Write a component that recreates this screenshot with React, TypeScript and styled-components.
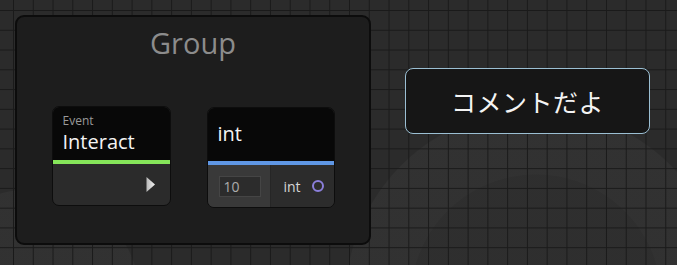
import React from "react";
import styled, { createGlobalStyle } from "styled-components";

const Global = createGlobalStyle`
  html, body { margin: 0; padding: 0; background: #2b2b2b; }
  body { font-family: "Open Sans", "Noto Sans", sans-serif; }
`;

const Canvas = styled.div`
  position: relative;
  width: 677px;
  height: 265px;
  overflow: hidden;
  background-color: #2b2b2b;
  background-image:
    linear-gradient(to right, #1a1a1a 1px, transparent 1px),
    linear-gradient(to bottom, #1a1a1a 1px, transparent 1px),
    radial-gradient(circle at 536px 300px, rgba(0,0,0,0.07) 0 125px, transparent 126px),
    radial-gradient(circle at 536px 300px, rgba(255,255,255,0.03) 0 190px, transparent 191px),
    radial-gradient(circle at 30px 300px, rgba(255,255,255,0.03) 0 110px, transparent 111px);
  background-size: 19.78px 19.78px, 19.78px 19.78px, 100% 100%, 100% 100%, 100% 100%;
  background-position: 13px 10px, 13px 10px, 0 0, 0 0, 0 0;
`;

const GroupPanel = styled.div`
  position: absolute;
  left: 15px;
  top: 15px;
  width: 356px;
  height: 230px;
  box-sizing: border-box;
  background: #1d1d1d;
  border: 2px solid #0c0c0c;
  border-radius: 9px;
  display: flex;
  flex-direction: column;
  align-items: center;
`;

const GroupTitle = styled.div`
  margin-top: 6px;
  color: #8c8c8c;
  font-size: 29px;
  line-height: 40px;
  font-family: "Open Sans", "Noto Sans", sans-serif;
`;

const NodeRow = styled.div`
  display: flex;
  align-items: flex-start;
  gap: 36px;
  margin-top: 43px;
`;

const Node = styled.div<{ $w: number; $dy?: number }>`
  width: ${(p) => p.$w}px;
  margin-top: ${(p) => p.$dy ?? 0}px;
  box-sizing: border-box;
  border: 1px solid #0d0d0d;
  border-radius: 7px;
  overflow: hidden;
  background: #2b2b2b;
  display: flex;
  flex-direction: column;
`;

const Header = styled.div<{ $accent: string; $lift?: number }>`
  height: 57px;
  box-sizing: border-box;
  background: #080808;
  border-bottom: 4px solid ${(p) => p.$accent};
  padding: 4px 10px ${(p) => p.$lift ?? 0}px;
  display: flex;
  flex-direction: column;
  justify-content: center;
  color: #f2f2f2;
`;

const Kind = styled.div`
  font-size: 12px;
  line-height: 14px;
  color: #9a9a9a;
  margin-top: -3px;
`;

const Title = styled.div`
  font-size: 20px;
  line-height: 27px;
  color: #f4f4f4;
`;

const ExecBody = styled.div`
  height: 41px;
  display: flex;
  align-items: center;
  justify-content: flex-end;
  padding-right: 14px;
`;

const ValueBody = styled.div`
  height: 42px;
  display: flex;
`;

const InputCell = styled.div`
  width: 63px;
  background: #393939;
  display: flex;
  align-items: center;
  padding-left: 11px;
  box-sizing: border-box;
  border-right: 1px solid #262626;
`;

const NumberBox = styled.div`
  width: 42px;
  height: 21px;
  box-sizing: border-box;
  background: #2c2c2c;
  border: 1px solid #454545;
  color: #acacac;
  font-size: 14px;
  line-height: 19px;
  padding-left: 4px;
`;

const OutputCell = styled.div`
  flex: 1;
  background: #2c2c2c;
  display: flex;
  align-items: center;
  justify-content: flex-end;
  gap: 11px;
  padding-right: 10px;
  color: #d6d6d6;
  font-size: 14px;
`;

const Port = styled.span`
  width: 8px;
  height: 8px;
  border-radius: 50%;
  border: 2px solid #8b7fdb;
  box-sizing: content-box;
`;

const Comment = styled.div`
  position: absolute;
  left: 405px;
  top: 68px;
  width: 245px;
  height: 66px;
  box-sizing: border-box;
  background: #161616;
  border: 1px solid #9bbfd3;
  border-radius: 8px;
  display: flex;
  align-items: center;
  justify-content: center;
  color: #f4f4f4;
  font-size: 25px;
  font-family: "Noto Sans CJK JP", "Noto Sans", sans-serif;
  font-weight: 400;
  letter-spacing: 0.5px;
`;

const ExecArrow = () => (
  <svg width="11" height="17" viewBox="0 0 11 17">
    <defs>
      <linearGradient id="ag" x1="0" y1="0" x2="1" y2="0">
        <stop offset="0" stopColor="#b8b8b8" />
        <stop offset="1" stopColor="#f2f2f2" />
      </linearGradient>
    </defs>
    <path d="M1.5 1 L10 8.5 L1.5 16 Z" fill="url(#ag)" />
  </svg>
);

export default function App() {
  return (
    <>
      <Global />
      <Canvas>
        <GroupPanel>
          <GroupTitle>Group</GroupTitle>
          <NodeRow>
            <Node $w={119}>
              <Header $accent="#86e55a">
                <Kind>Event</Kind>
                <Title>Interact</Title>
              </Header>
              <ExecBody>
                <ExecArrow />
              </ExecBody>
            </Node>
            <Node $w={128} $dy={1}>
              <Header $accent="#5f97e5" $lift={6}>
                <Title>int</Title>
              </Header>
              <ValueBody>
                <InputCell>
                  <NumberBox>10</NumberBox>
                </InputCell>
                <OutputCell>
                  int
                  <Port />
                </OutputCell>
              </ValueBody>
            </Node>
          </NodeRow>
        </GroupPanel>
        <Comment>コメントだよ</Comment>
      </Canvas>
    </>
  );
}
